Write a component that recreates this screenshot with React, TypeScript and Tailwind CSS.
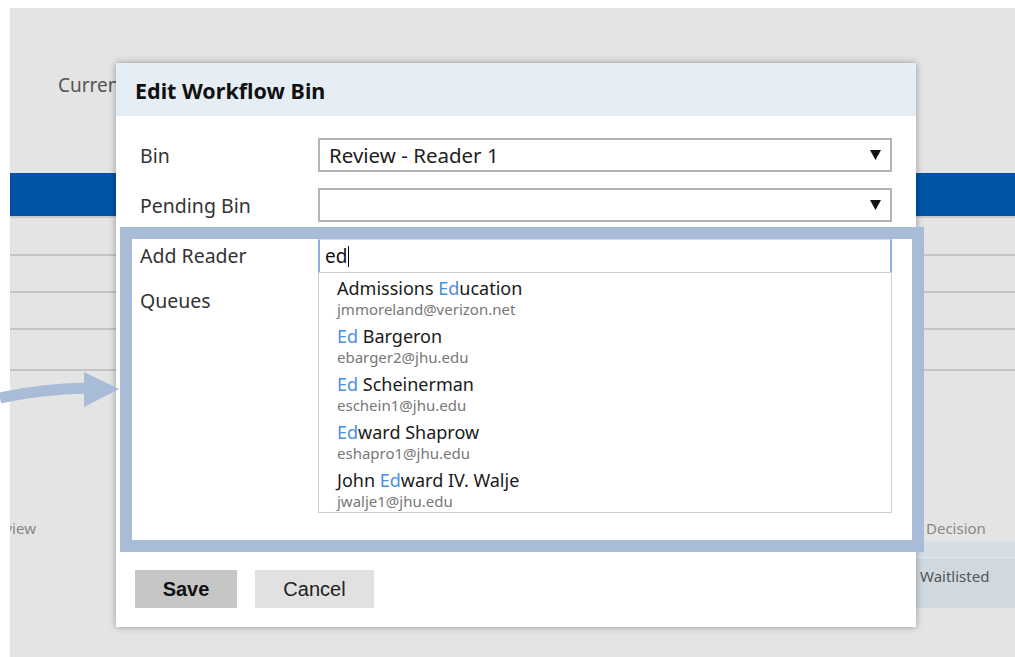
import React from 'react';

type Reader = { pre: string; match: string; post: string; email: string };

const readers: Reader[] = [
  { pre: 'Admissions ', match: 'Ed', post: 'ucation', email: 'jmmoreland@verizon.net' },
  { pre: '', match: 'Ed', post: ' Bargeron', email: 'ebarger2@jhu.edu' },
  { pre: '', match: 'Ed', post: ' Scheinerman', email: 'eschein1@jhu.edu' },
  { pre: '', match: 'Ed', post: 'ward Shaprow', email: 'eshapro1@jhu.edu' },
  { pre: 'John ', match: 'Ed', post: 'ward IV. Walje', email: 'jwalje1@jhu.edu' },
];

const ui = { fontFamily: '"Noto Sans", "Open Sans", sans-serif' };
const arial = { fontFamily: '"Liberation Sans", Arial, sans-serif' };

function Caret() {
  return (
    <svg width="11" height="10" viewBox="0 0 11 10">
      <polygon points="0,0 11,0 5.5,10" fill="#111" />
    </svg>
  );
}

function Select({ value }: { value?: string }) {
  return (
    <div className="flex h-[34px] items-center justify-between border-2 border-[#b4b4b4] bg-white pl-[9px] pr-[9px]">
      <span className="text-[20.5px] leading-[28px] text-[#222]">{value}</span>
      <Caret />
    </div>
  );
}

function Row({ label, className, children }: { label: string; className?: string; children: React.ReactNode }) {
  return (
    <div className={`flex items-center ${className ?? ''}`}>
      <div className="w-[178px] shrink-0 text-[19.5px] leading-[27px] text-[#333]">{label}</div>
      <div className="flex-1">{children}</div>
    </div>
  );
}

function ReaderPicker() {
  return (
    <div className="relative">
      <div className="flex h-[33px] items-center border-x-2 border-t border-x-[#8eaee4] border-t-[#cddcf2] bg-white pl-[5px]">
        <span className="text-[19px] leading-[26px] text-[#111]">ed</span>
        <span className="ml-px h-[21px] w-px bg-black" />
      </div>
      {/* suggestion list */}
      <div className="absolute left-0 right-0 top-full z-10 h-[241px] border border-[#cfcfcf] bg-white pl-[18px] pt-[4px]">
        {readers.map((r) => (
          <div key={r.email} className="flex h-[48px] flex-col">
            <div className="text-[18px] leading-[23px] text-[#1a1a1a]">
              {r.pre}
              <span className="text-[#4a8ee6]">{r.match}</span>
              {r.post}
            </div>
            <div className="text-[15px] leading-[19px] text-[#777]">{r.email}</div>
          </div>
        ))}
      </div>
    </div>
  );
}

export default function App() {
  return (
    <div className="relative h-[657px] w-[1015px] overflow-hidden bg-white pl-[10px] pt-[8px]" style={ui}>
      {/* page behind the dialog */}
      <div className="flex h-full flex-col overflow-hidden bg-[#e4e4e4]">
        <div className="h-[165px] shrink-0 pl-[48px] pt-[64px] text-[19px] leading-[27px] text-[#555]">Current</div>
        <div className="h-[43px] shrink-0 bg-[#0054a6]" />
        <div className="h-[2px] shrink-0 bg-[#cacaca]" />
        <div className="h-[38px] shrink-0 border-b-2 border-[#c4c4c4]" />
        <div className="h-[37px] shrink-0 border-b-2 border-[#c4c4c4]" />
        <div className="h-[37px] shrink-0 border-b-2 border-[#c4c4c4]" />
        <div className="h-[41px] shrink-0 border-b-2 border-[#c4c4c4]" />
        <div className="mt-[144px] grid shrink-0 grid-cols-[906px_1fr]">
          <div className="flex h-[26px] items-center text-[15px] text-[#888]">
            <span className="ml-[-23px]">Review</span>
          </div>
          <div className="flex h-[26px] items-center pl-[10px] text-[15px] text-[#888]">Decision</div>
          <div />
          <div className="h-[17px] border-b border-[#e2e8ee] bg-[#d6dee5]" />
          <div />
          <div className="flex h-[50px] items-start bg-[#d0d9e0] pl-[4px] pt-[7px] text-[15px] leading-[22px] text-[#555]">
            Waitlisted
          </div>
        </div>
      </div>

      {/* dialog */}
      <div className="absolute left-[116px] top-[63px] flex h-[564px] w-[800px] flex-col bg-white shadow-[0_0_7px_rgba(0,0,0,0.35)]">
        <div className="flex h-[53px] shrink-0 items-center bg-[#e6eef5] pl-[19px] pt-[3px] text-[21.5px] font-bold text-[#111]">
          Edit Workflow Bin
        </div>
        <div className="flex-1 px-[24px] pt-[22px]">
          <Row label="Bin">
            <Select value="Review - Reader 1" />
          </Row>
          <Row label="Pending Bin" className="mt-[16px]">
            <Select />
          </Row>
          <Row label="Add Reader" className="mt-[17px]">
            <ReaderPicker />
          </Row>
          <div className="mt-[15px] text-[19.5px] leading-[27px] text-[#333]">Queues</div>
        </div>
        <div className="flex gap-[18px] px-[19px] pb-[19px]" style={arial}>
          <button className="h-[38px] w-[102px] bg-[#c6c6c6] text-[20px] font-bold text-[#111]">Save</button>
          <button className="h-[38px] w-[119px] bg-[#e1e1e1] text-[20px] text-[#222]">Cancel</button>
        </div>
      </div>

      {/* callout frame and arrow */}
      <div className="pointer-events-none absolute left-[120px] top-[227px] h-[325px] w-[804px] border-[12px] border-[#a8bcd8]" />
      <svg className="pointer-events-none absolute left-0 top-[365px]" width="122" height="45" viewBox="0 0 122 45">
        <path d="M0 33 Q 40 24 88 23" fill="none" stroke="#a8bcd8" strokeWidth="11" />
        <polygon points="84,7 119,24 84,42" fill="#a8bcd8" />
      </svg>
    </div>
  );
}
